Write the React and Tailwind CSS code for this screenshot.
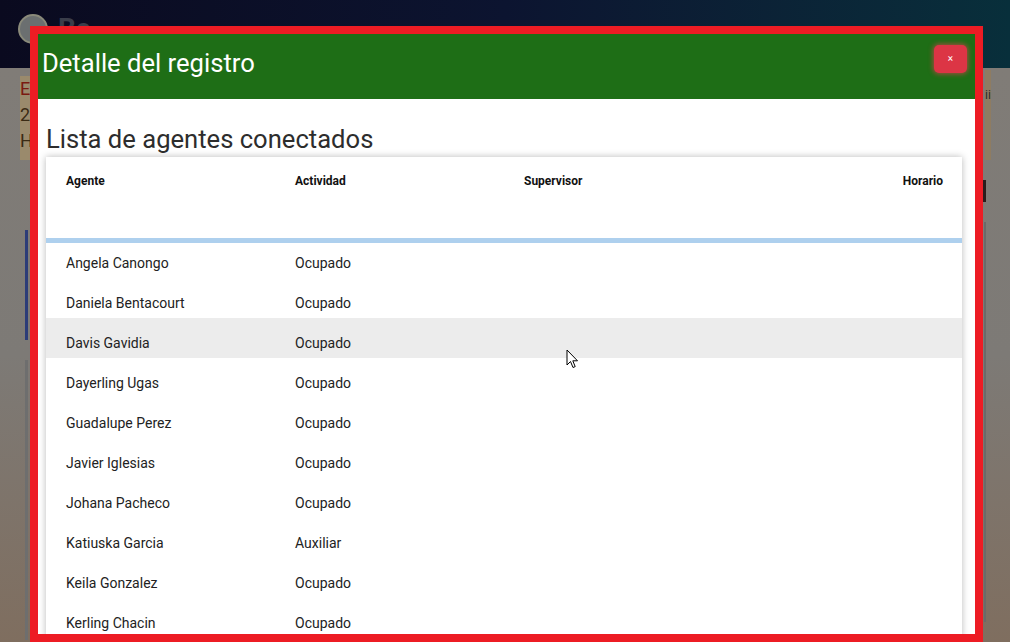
import React from "react";

const rows = [
  ["Angela Canongo", "Ocupado"],
  ["Daniela Bentacourt", "Ocupado"],
  ["Davis Gavidia", "Ocupado"],
  ["Dayerling Ugas", "Ocupado"],
  ["Guadalupe Perez", "Ocupado"],
  ["Javier Iglesias", "Ocupado"],
  ["Johana Pacheco", "Ocupado"],
  ["Katiuska Garcia", "Auxiliar"],
  ["Keila Gonzalez", "Ocupado"],
  ["Kerling Chacin", "Ocupado"],
];

export default function App() {
  return (
    <div
      className="relative w-[1010px] h-[642px] overflow-hidden"
      style={{ fontFamily: "Roboto, 'Noto Sans', sans-serif" }}
    >
      {/* background page */}
      <div className="flex flex-col w-full h-full">
        <div className="h-[68px] bg-gradient-to-r from-[#0a0a1f] via-[#0c1430] to-[#082f3b] flex items-start pl-[18px] pt-[14px] gap-[10px]">
          <div className="w-[30px] h-[30px] rounded-full bg-[#6b6f70] border-2 border-[#8a8a7a]" />
          <div className="text-[#3a3d4a] text-[28px] font-bold leading-[30px]">Bc</div>
        </div>
        <div className="flex-1 flex bg-gradient-to-b from-[#807c77] via-[#7d7a76] to-[#7f6e5f]">
          <div className="w-[30px] flex flex-col">
            <div className="mt-[8px] ml-[20px] w-[10px] h-[84px] bg-[#9a8a6c] flex flex-col text-[18px] leading-[26px] text-[#3a2a14]">
              <span className="text-[#7a1a10]">E</span>
              <span>2</span>
              <span>H</span>
            </div>
            <div className="mt-[70px] ml-[25px] w-[3px] h-[110px] bg-[#2c3c78]" />
            <div className="mt-[20px] ml-[25px] w-[3px] h-[280px] bg-[#6e6e6e]" />
          </div>
          <div className="flex-1" />
          <div className="w-[27px] flex flex-col">
            <div className="mt-[2px] ml-[2px] w-[6px] h-[90px] bg-[#8e7c62] text-[12px] text-[#2a2a2a] leading-[50px]">ii</div>
            <div className="mt-[20px] w-[3px] h-[22px] bg-[#2a1c1c]" />
            <div className="mt-[20px] ml-[1px] w-[2px] h-[400px] bg-[#6a6a6a]" />
          </div>
        </div>
      </div>

      {/* modal */}
      <div className="absolute left-[30px] top-[26px] w-[953px] h-[616px] border-8 border-[#ed1c24] bg-white flex flex-col overflow-hidden">
        <div className="h-[65px] shrink-0 bg-[#1e6e16] flex justify-between pl-[4px] pr-[8px]">
          <h2 className="mt-[14px] text-white text-[25.6px] font-normal leading-[30px]">
            Detalle del registro
          </h2>
          <button className="mt-[11px] w-[33px] h-[28px] rounded-[5px] bg-[#dc3545] shadow-[0_0_5px_1px_rgba(230,60,80,0.7)] text-white text-[10px] leading-none flex items-center justify-center">
            ×
          </button>
        </div>
        <div className="flex-1 pl-[8px] pr-[13px] overflow-hidden">
          <h3 className="mt-[25px] h-[30px] leading-[30px] text-[25.6px] text-[#2d2d2d] font-normal">
            Lista de agentes conectados
          </h3>
          <div className="mt-[3px] bg-white shadow-[0_0_7px_rgba(0,0,0,0.28)]">
            <div className="grid grid-cols-4 h-[81px] text-[12px] font-bold text-[#111] leading-[14px]">
              <div className="pl-[20px] pt-[17px]">Agente</div>
              <div className="pl-[20px] pt-[17px]">Actividad</div>
              <div className="pl-[20px] pt-[17px]">Supervisor</div>
              <div className="pr-[19px] pt-[17px] text-right">Horario</div>
            </div>
            {rows.map(([name, act], i) => (
              <div
                key={name}
                className={`grid grid-cols-4 h-[40px] text-[14px] leading-[16px] text-[#222] ${i === 0 ? "border-t-[5px] border-[#aed0ee] pt-[12px]" : "pt-[17px]"} ${i === 2 ? "bg-[#ececec]" : "bg-white"}`}
              >
                <div className="pl-[20px]">{name}</div>
                <div className="pl-[20px]">{act}</div>
                <div className="pl-[20px]"></div>
                <div className="pr-[19px]"></div>
              </div>
            ))}
          </div>
        </div>
      </div>

      {/* mouse cursor */}
      <svg
        className="absolute left-[566px] top-[349px]"
        width="14"
        height="21"
        viewBox="0 0 14 21"
      >
        <path
          d="M1 1 L1 16 L4.5 12.5 L7 18.5 L9.2 17.6 L6.8 11.8 L11.5 11.8 Z"
          fill="white"
          stroke="black"
          strokeWidth="1"
          strokeLinejoin="round"
        />
      </svg>
    </div>
  );
}
